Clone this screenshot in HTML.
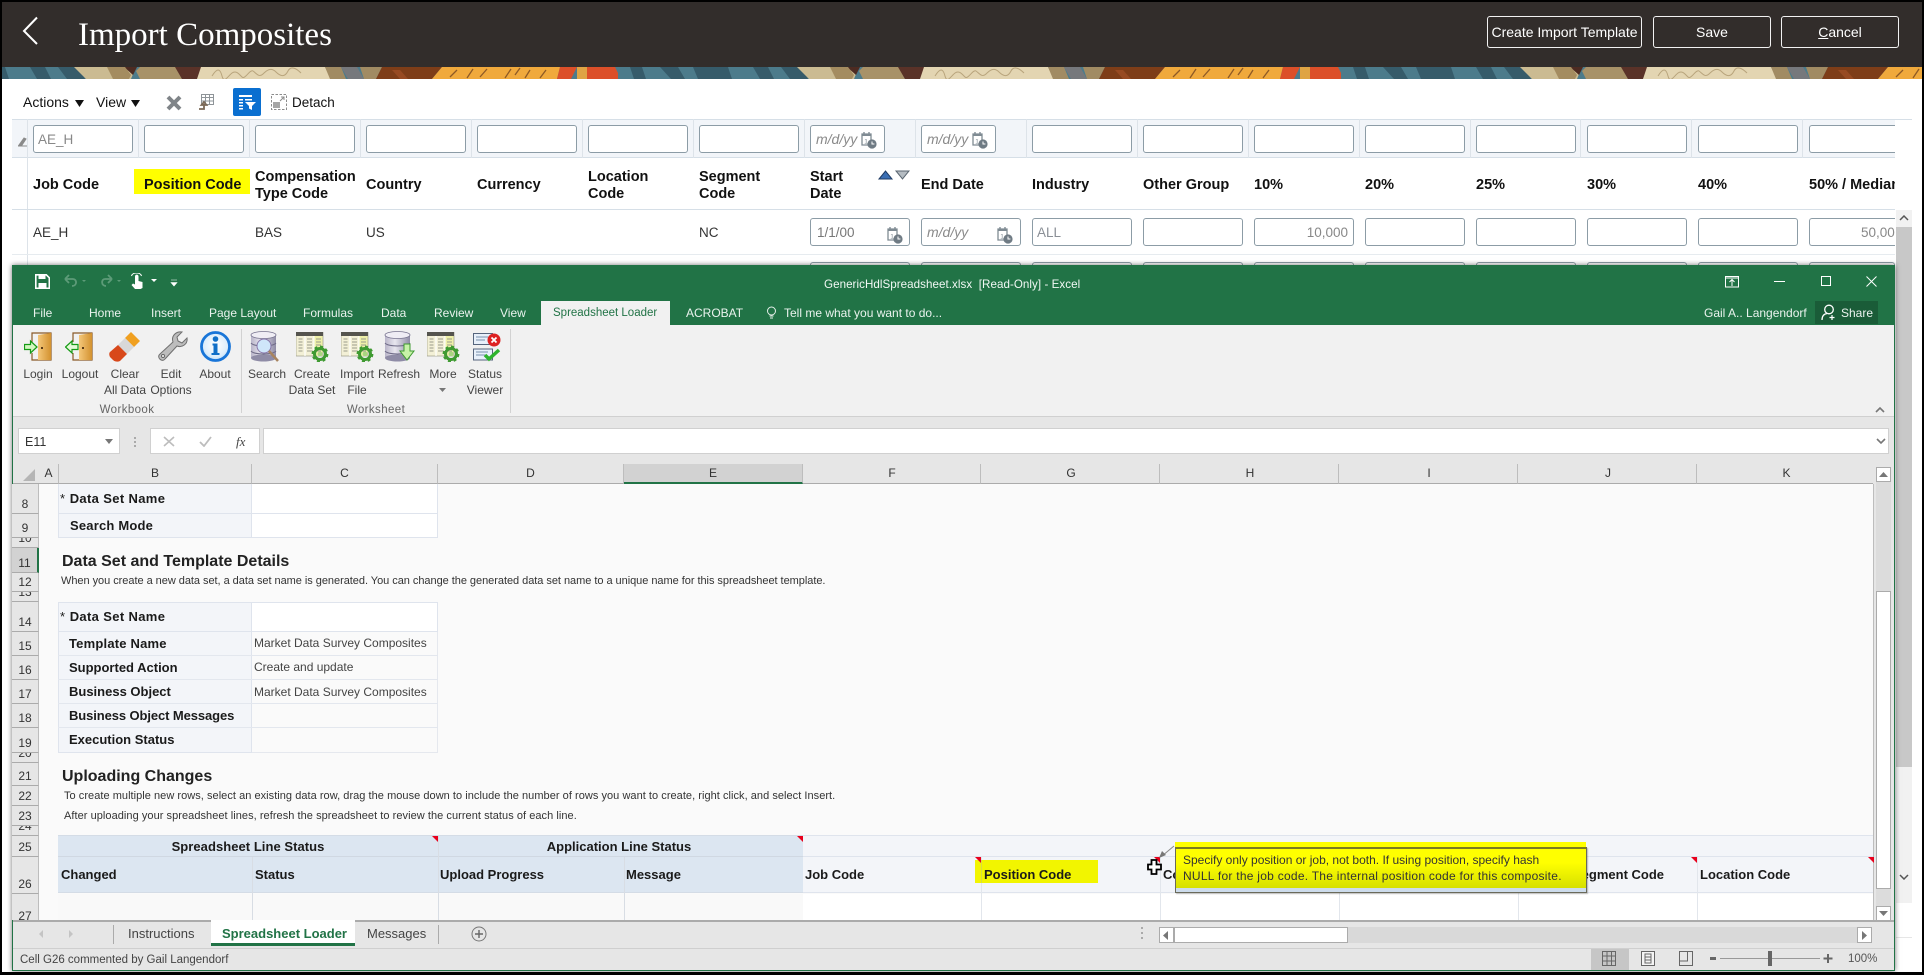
<!DOCTYPE html>
<html lang="en"><head><meta charset="utf-8"><title>Import Composites</title>
<style>
*{box-sizing:border-box}
html,body{margin:0;padding:0;width:1924px;height:975px;overflow:hidden;background:#fff;font-family:"Liberation Sans",Arial,sans-serif}
#p{position:relative;width:1924px;height:975px;overflow:hidden;background:#fff}
.a,.t,.i,.h,.in,.rh,.cl,.btn{position:absolute}
.t{white-space:nowrap;line-height:16px;height:16px}
.c{transform:translateX(-50%)}
.h{font-weight:bold;font-size:14.500px;line-height:17px;color:#111;white-space:nowrap}
.d{font-size:13.500px;color:#333}
.in{background:#fff;border:1px solid #8c9ca6;border-radius:3px;height:28px;width:100px;font-size:13.500px;color:#888;line-height:27px;padding-left:4px;overflow:hidden;white-space:nowrap}
.f{top:125px}.r{top:218px}
.it{font-style:italic;color:#8a8a8a;font-size:14px}
.v{position:absolute;top:119px;height:39px;width:1px;background:#dde3e9}
.btn{top:16px;height:32px;border:1px solid #f2f2f2;border-radius:3px;color:#fff;font-size:14px;text-align:center;line-height:31px;background:#322d2b;white-space:nowrap}
.w{color:#eaf3ee;font-size:12px}
.rb{font-size:12px;color:#444;text-align:center}
.rh{left:12px;width:27px;background:#e6e6e6;border-bottom:1px solid #ababab;border-right:1px solid #bdbdbd;display:flex;justify-content:center;align-items:flex-end;overflow:hidden;font-size:12px;line-height:16px;color:#333;padding-bottom:1px}
.cl{top:464px;height:20px;background:#e6e6e6;border-right:1px solid #bdbdbd;border-bottom:1px solid #ababab;text-align:center;font-size:12px;line-height:18px;color:#333}
.lb{font:bold 13px/16px "Liberation Sans",sans-serif;color:#1a1a1a}
.cv{font-size:12px;color:#444}
.sm{font-size:11px;color:#333}
.hh{font:bold 16px/18px "Liberation Sans",sans-serif;color:#222}
.tr{position:absolute;width:0;height:0;border-top:6px solid #e8001c;border-left:6px solid transparent}
</style></head><body><div id="p">

<svg width="0" height="0" style="position:absolute"><defs>
<g id="stg">
<rect x="-105" width="723" height="12" fill="#4c7b8b"/>
<path fill="#365b6a" d="M-93 0h12l4 12h-12zM-63 0h18l7 12h-14zM-30 0h35l4 12h-34zM30 0h15l6 12h-14zM58 0h22l5 12h-18z"/>
<path fill="#cbbb92" d="M74 0h62l-5 12H86z"/>
<path fill="#4d2b22" d="M124 0h13l-4 8z"/>
<path fill="#a48c60" d="M107 0h18l6 8-2 4h-16z"/>
<path fill="#a89268" d="M140 0h36l6 12h-42l-4-8z"/>
<path fill="#5a3228" d="M175 0h27l-5 12h-15z"/>
<path fill="#e3d5b2" d="M201 0h124l6 12H197z"/>
<path fill="none" stroke="#b8a47c" stroke-width="1" d="M212 9c5-8 8-8 10 0s6 0 10-3 7 1 10 4 8-8 11-6 6 7 10 3 8-7 13-2 9 5 12-1 9-2 13 2"/>
<path fill="#a18b63" d="M325 0h16l5 12h-16zM360 0h22l-6 12h-12z"/>
<path fill="#76787c" d="M341 0h16l7 12h-16z"/>
<path fill="#7e3d18" d="M382 0h60l-10 12h-56z"/>
<path fill="#a8532a" d="M400 12l-8-9 8 0 8 9z" opacity=".6"/>
<path fill="#f0a93c" d="M442 0h118l-3 12H432z"/>
<path fill="none" stroke="#8e5a26" stroke-width="1.300" d="M450 10l7-7M467 11l6-9M480 10l7-8M505 11l6-9M515 8l5-7M525 11l5-8M540 11l6-8"/>
<path fill="#dc4f29" d="M560 0h17l-6 12h-14zM587 0h28l6 12h-34z"/>
<rect x="577" width="10" height="12" fill="#f0a93c" opacity=".9"/>
</g>
<symbol id="cal" viewBox="0 0 16 18"><path d="M1 3h9v11H1z" fill="#fff" stroke="#7f8b93" stroke-width="1.300"/><path d="M3 1v3M8 1v3" stroke="#7f8b93" stroke-width="1.400"/><path d="M1 3h9v2H1z" fill="#7f8b93"/><text x="3.200" y="12.500" font-size="6.500" fill="#7f8b93" font-family="Liberation Sans">1</text><circle cx="11" cy="13" r="4.600" fill="#6f7b84"/><path d="M11 10.500V13h2.400" stroke="#fff" stroke-width="1" fill="none"/></symbol>
<linearGradient id="drg" x1="0" x2="1"><stop offset="0" stop-color="#f4c77a"/><stop offset="1" stop-color="#d3922f"/></linearGradient>
<linearGradient id="db" x1="0" x2="1"><stop offset="0" stop-color="#b9b5c9"/><stop offset=".4" stop-color="#e8e6ef"/><stop offset="1" stop-color="#8f8ca6"/></linearGradient>
<radialGradient id="ab" cx=".5" cy=".45" r=".6"><stop offset="0" stop-color="#ffffff"/><stop offset=".7" stop-color="#dcedfb"/><stop offset="1" stop-color="#a7d2f5"/></radialGradient>
<symbol id="tbl" viewBox="0 0 33 30"><rect x="0" y="0" width="27" height="24" fill="#f3f0d6" stroke="#9a9a86" stroke-width=".7"/><rect width="27" height="4" fill="#55544e"/><path d="M9 4v20M18 4v20" stroke="#fff" stroke-width="1.200"/><rect x="18.500" y="4" width="8" height="20" fill="#eef0a8"/><path d="M2.500 7h4M2.500 10h4M2.500 13h4M2.500 16h4M2.500 19h4M11 7h5M11 10h5M11 13h5M11 16h5M11 19h5M20 7h5M20 10h5M20 13h5M20 16h5M20 19h5" stroke="#9b9b8c" stroke-width="1"/><circle cx="24" cy="22" r="5.500" fill="none" stroke="#3f9a31" stroke-width="3"/><circle cx="24" cy="22" r="7.300" fill="none" stroke="#3f9a31" stroke-width="2.200" stroke-dasharray="3 2.700"/><circle cx="24" cy="22" r="2.400" fill="#a8d67f"/></symbol>
<symbol id="cyl" viewBox="0 0 27 31"><rect x="1" y="4" width="25" height="23" fill="url(#db)"/><ellipse cx="13.500" cy="27" rx="12.500" ry="3.500" fill="#8f8ca6"/><ellipse cx="13.500" cy="4" rx="12.500" ry="3.500" fill="#efedf4" stroke="#77748f" stroke-width=".8"/><path d="M1 12c3 4 22 4 25 0M1 20c3 4 22 4 25 0" fill="none" stroke="#6e6a86" stroke-width="1"/></symbol>
<symbol id="door" viewBox="0 0 28 29"><path d="M8 10V1h19v27H8v-7" fill="none" stroke="#8a5a28" stroke-width="1.200"/><path d="M14 3l13-2v27H14z" fill="url(#drg)"/><rect x="17" y="15" width="2" height="2" fill="#5a3b17"/></symbol>
</defs></svg>

<!-- outer border -->
<div class="a" style="left:0;top:0;width:1924px;height:2px;background:#000"></div>
<div class="a" style="left:0;top:0;width:2px;height:975px;background:#000"></div>
<div class="a" style="left:0;top:972px;width:1924px;height:3px;background:#000"></div>
<div class="a" style="left:1922px;top:0;width:2px;height:975px;background:#000"></div>

<!-- header -->
<div class="a" style="left:2px;top:2px;width:1920px;height:65px;background:#322d2b"></div>
<svg class="a" style="left:2px;top:67px" width="1920" height="12" viewBox="2 0 1920 12"><use href="#stg"/><use href="#stg" x="723"/><use href="#stg" x="1446"/></svg>
<svg class="a" style="left:20px;top:15px" width="22" height="30"><path d="M17 2.500 4 16l13 13" fill="none" stroke="#fff" stroke-width="2"/></svg>
<div class="t" style="left:78px;top:17px;height:36px;font:33px/36px 'Liberation Serif',serif;color:#fff">Import Composites</div>
<div class="btn" style="left:1487px;width:155px">Create Import Template</div>
<div class="btn" style="left:1653px;width:118px">Save</div>
<div class="btn" style="left:1781px;width:118px"><u>C</u>ancel</div>

<!-- toolbar -->
<div class="t" style="left:23px;top:94px;font-size:14px;color:#111">Actions</div>
<svg class="a" style="left:75px;top:100px" width="9" height="8"><path d="M0 0h9L4.500 7z" fill="#111"/></svg>
<div class="t" style="left:96px;top:94px;font-size:14px;color:#111">View</div>
<svg class="a" style="left:131px;top:100px" width="9" height="8"><path d="M0 0h9L4.500 7z" fill="#111"/></svg>
<svg class="a" style="left:166px;top:95px" width="16" height="16"><path d="M2 2l12 12M14 2 2 14" stroke="#7f8488" stroke-width="4"/></svg>
<svg class="a" style="left:198px;top:93px" width="16" height="18"><path d="M3.500 1.500h12v10h-12zM3.500 4.500h12M7.500 1.500v10M11.500 1.500v10M3.500 8h12" fill="none" stroke="#8e9498" stroke-width="1"/><path d="M6 11v5H1M6 9l-2.500 3h5z" fill="none" stroke="#7b6a58" stroke-width="1.800"/></svg>
<div class="a" style="left:233px;top:88px;width:28px;height:28px;background:#0a6fd0;border-radius:2px"></div>
<svg class="a" style="left:238px;top:94px" width="19" height="17"><path d="M1 1h13v2H1zM1 5h4v1.500H1zM1 8h4v1.500H1zM1 11h4v1.500H1zM1 14h4v1.500H1zM7 5h7v1.500H7z" fill="#fff"/><path d="M7 8h11l-4 4v4l-3-1.500V12z" fill="#fff"/></svg>
<svg class="a" style="left:271px;top:94px" width="16" height="16"><rect x=".5" y=".5" width="15" height="15" fill="none" stroke="#8b8b8b" stroke-dasharray="2.500 1.500"/><rect x="2" y="8" width="7" height="6" fill="#a5a5a5"/><path d="M9 7l4-4M10 3h3v3" fill="none" stroke="#8b8b8b"/></svg>
<div class="t" style="left:292px;top:95px;font-size:13.500px;color:#111">Detach</div>

<!-- filter row -->
<div class="a" style="left:12px;top:119px;width:1883px;height:39px;background:#f2f5f9;border-top:1px solid #d6dfe7;border-bottom:1px solid #d6dfe7"></div>
<div class="a" style="left:1895px;top:119px;width:17px;height:1px;background:#d6dfe7"></div>
<div class="a" style="left:27px;top:119px;width:1px;height:146px;background:#dde3e9"></div>
<svg class="a" style="left:18px;top:134px" width="9" height="13"><path d="M1 11l5-7 2 1-4 6zM0 12h9" stroke="#8a8a8a" fill="#8a8a8a"/></svg>
<div class="v" style="left:138px"></div><div class="v" style="left:249px"></div><div class="v" style="left:360px"></div><div class="v" style="left:471px"></div><div class="v" style="left:582px"></div><div class="v" style="left:693px"></div><div class="v" style="left:804px"></div><div class="v" style="left:915px"></div><div class="v" style="left:1026px"></div><div class="v" style="left:1137px"></div><div class="v" style="left:1248px"></div><div class="v" style="left:1359px"></div><div class="v" style="left:1470px"></div><div class="v" style="left:1580px"></div><div class="v" style="left:1691px"></div><div class="v" style="left:1802px"></div>
<div class="in f" style="left:33px">AE_H</div>
<div class="in f" style="left:144px"></div><div class="in f" style="left:255px"></div><div class="in f" style="left:366px"></div><div class="in f" style="left:477px"></div><div class="in f" style="left:588px"></div><div class="in f" style="left:699px"></div>
<div class="in f it" style="left:810px;width:75px;padding-left:5px">m/d/yy</div>
<svg class="a" style="left:861px;top:131px" width="16" height="18"><use href="#cal"/></svg>
<div class="in f it" style="left:921px;width:75px;padding-left:5px">m/d/yy</div>
<svg class="a" style="left:972px;top:131px" width="16" height="18"><use href="#cal"/></svg>
<div class="in f" style="left:1032px"></div><div class="in f" style="left:1143px"></div><div class="in f" style="left:1254px"></div><div class="in f" style="left:1365px"></div><div class="in f" style="left:1476px"></div><div class="in f" style="left:1587px"></div><div class="in f" style="left:1698px"></div>
<div class="in f" style="left:1809px;width:86px;border-right:0;border-radius:3px 0 0 3px"></div>

<!-- header row -->
<div class="a" style="left:134px;top:169px;width:116px;height:25px;background:#ffff00"></div>
<div class="h" style="left:33px;top:177px">Job Code</div>
<div class="h" style="left:144px;top:177px">Position Code</div>
<div class="h" style="left:255px;top:169px">Compensation<br>Type Code</div>
<div class="h" style="left:366px;top:177px">Country</div>
<div class="h" style="left:477px;top:177px">Currency</div>
<div class="h" style="left:588px;top:169px">Location<br>Code</div>
<div class="h" style="left:699px;top:169px">Segment<br>Code</div>
<div class="h" style="left:810px;top:169px">Start<br>Date</div>
<svg class="a" style="left:878px;top:170px" width="32" height="10"><path d="M1 9 7.500 1 14 9z" fill="#3b6fb4" stroke="#1f3b63"/><path d="M18 1h13l-6.500 8z" fill="#b5bcc2" stroke="#5a6570"/></svg>
<div class="h" style="left:921px;top:177px">End Date</div>
<div class="h" style="left:1032px;top:177px">Industry</div>
<div class="h" style="left:1143px;top:177px">Other Group</div>
<div class="h" style="left:1254px;top:177px">10%</div>
<div class="h" style="left:1365px;top:177px">20%</div>
<div class="h" style="left:1476px;top:177px">25%</div>
<div class="h" style="left:1587px;top:177px">30%</div>
<div class="h" style="left:1698px;top:177px">40%</div>
<div class="h" style="left:1809px;top:177px;width:86px;overflow:hidden">50% / Median</div>
<div class="a" style="left:12px;top:209px;width:1883px;height:1px;background:#d6dfe7"></div>

<!-- data row -->
<div class="t d" style="left:33px;top:225px">AE_H</div>
<div class="t d" style="left:255px;top:225px">BAS</div>
<div class="t d" style="left:366px;top:225px">US</div>
<div class="t d" style="left:699px;top:225px">NC</div>
<div class="in r" style="left:810px;color:#777;padding-left:6px">1/1/00</div>
<svg class="a" style="left:887px;top:226px" width="16" height="18"><use href="#cal"/></svg>
<div class="in r it" style="left:921px;padding-left:5px">m/d/yy</div>
<svg class="a" style="left:997px;top:226px" width="16" height="18"><use href="#cal"/></svg>
<div class="in r" style="left:1032px;color:#8a8f96">ALL</div>
<div class="in r" style="left:1143px"></div>
<div class="in r" style="left:1254px;text-align:right;padding-right:5px;color:#888">10,000</div>
<div class="in r" style="left:1365px"></div><div class="in r" style="left:1476px"></div><div class="in r" style="left:1587px"></div><div class="in r" style="left:1698px"></div>
<div class="in r" style="left:1809px;width:86px;border-right:0;border-radius:3px 0 0 3px;color:#888;padding-left:51px">50,00</div>
<div class="a" style="left:12px;top:254px;width:1883px;height:1px;background:#e6ebef"></div>
<div class="a" style="left:810px;top:262px;width:100px;height:4px;border:1px solid #8c9ca6;border-bottom:0;border-radius:3px 3px 0 0"></div>
<div class="a" style="left:921px;top:262px;width:100px;height:4px;border:1px solid #8c9ca6;border-bottom:0;border-radius:3px 3px 0 0"></div>
<div class="a" style="left:1032px;top:262px;width:100px;height:4px;border:1px solid #8c9ca6;border-bottom:0;border-radius:3px 3px 0 0"></div>
<div class="a" style="left:1143px;top:262px;width:100px;height:4px;border:1px solid #8c9ca6;border-bottom:0;border-radius:3px 3px 0 0"></div>
<div class="a" style="left:1254px;top:262px;width:100px;height:4px;border:1px solid #8c9ca6;border-bottom:0;border-radius:3px 3px 0 0"></div>
<div class="a" style="left:1365px;top:262px;width:100px;height:4px;border:1px solid #8c9ca6;border-bottom:0;border-radius:3px 3px 0 0"></div>
<div class="a" style="left:1476px;top:262px;width:100px;height:4px;border:1px solid #8c9ca6;border-bottom:0;border-radius:3px 3px 0 0"></div>
<div class="a" style="left:1587px;top:262px;width:100px;height:4px;border:1px solid #8c9ca6;border-bottom:0;border-radius:3px 3px 0 0"></div>
<div class="a" style="left:1698px;top:262px;width:100px;height:4px;border:1px solid #8c9ca6;border-bottom:0;border-radius:3px 3px 0 0"></div>
<div class="a" style="left:1809px;top:262px;width:86px;height:4px;border:1px solid #8c9ca6;border-bottom:0;border-radius:3px 3px 0 0"></div>

<!-- page scrollbar -->
<div class="a" style="left:1896px;top:210px;width:16px;height:17px;background:#f1f1f1"></div>
<svg class="a" style="left:1899px;top:215px" width="10" height="6"><path d="M1 5l4-4 4 4" fill="none" stroke="#555" stroke-width="1.500"/></svg>
<div class="a" style="left:1896px;top:227px;width:16px;height:540px;background:#c8c8c8"></div>
<div class="a" style="left:1896px;top:767px;width:16px;height:136px;background:#f1f1f1"></div>
<svg class="a" style="left:1899px;top:874px" width="10" height="6"><path d="M1 1l4 4 4-4" fill="none" stroke="#555" stroke-width="1.500"/></svg>
<div class="a" style="left:1896px;top:937px;width:16px;height:1px;background:#e6e6e6"></div>

<!-- excel window -->
<div class="a" style="left:12px;top:265px;width:1883px;height:706px;background:#e6e6e6;border:1px solid #217346;border-top:0;box-shadow:0 0 5px rgba(0,0,0,.55)"></div>
<div class="a" style="left:12px;top:265px;width:1883px;height:60px;background:#217346"></div>
<svg class="a" style="left:35px;top:274px" width="15" height="15"><path d="M.8.8h10.500l3 3v10.500H.8z" fill="none" stroke="#fff" stroke-width="1.600"/><rect x="3.500" y="1" width="7" height="4" fill="#fff"/><rect x="3.500" y="9" width="8" height="5" fill="#fff"/></svg>
<svg class="a" style="left:63px;top:274px" width="24" height="14"><path d="M2 5h8c4 0 4.500 7-1 7M2 5l4-4M2 5l4 4" fill="none" stroke="#5d9b78" stroke-width="1.800"/><path d="M19 6h4l-2 2z" fill="#5d9b78"/></svg>
<svg class="a" style="left:99px;top:274px" width="24" height="14"><path d="M13 5H6c-4 0-4 7 1 7M13 5 9 1M13 5 9 9" fill="none" stroke="#5d9b78" stroke-width="1.800"/><path d="M18 6h4l-2 2z" fill="#5d9b78"/></svg>
<svg class="a" style="left:130px;top:273px" width="30" height="17"><path d="M5 8V3.500c0-2.500 3.500-2.500 3.500 0V8l4 1v6l-2 1H5L1.500 12 3 10.500l2 1z" fill="#fff"/><path d="M1.500 3c1-4 9-4 10 0" fill="none" stroke="#fff"/><path d="M21 6h6l-3 3z" fill="#fff"/></svg>
<svg class="a" style="left:170px;top:279px" width="8" height="8"><path d="M1 1h6M1 3.500h6L4 7z" stroke="#fff" fill="#fff" stroke-width=".6"/></svg>
<div class="t" style="left:824px;top:277px;font-size:11.600px;color:#f1f8f4;letter-spacing:.05px">GenericHdlSpreadsheet.xlsx&nbsp;&nbsp;[Read-Only] - Excel</div>
<svg class="a" style="left:1725px;top:275px" width="15" height="13"><rect x=".5" y="1.500" width="13" height="10.500" fill="none" stroke="#fff"/><path d="M.5 3h13M7 11V5M4.500 7 7 4.500 9.500 7" fill="none" stroke="#fff"/></svg>
<div class="a" style="left:1774px;top:281px;width:11px;height:1px;background:#fff"></div>
<div class="a" style="left:1821px;top:276px;width:10px;height:10px;border:1px solid #fff"></div>
<svg class="a" style="left:1866px;top:276px" width="11" height="11"><path d="M.5.500l10 10M10.500.500l-10 10" stroke="#fff"/></svg>

<div class="t w" style="left:33px;top:305px">File</div>
<div class="t w" style="left:89px;top:305px">Home</div>
<div class="t w" style="left:151px;top:305px">Insert</div>
<div class="t w" style="left:209px;top:305px">Page Layout</div>
<div class="t w" style="left:303px;top:305px">Formulas</div>
<div class="t w" style="left:381px;top:305px">Data</div>
<div class="t w" style="left:434px;top:305px">Review</div>
<div class="t w" style="left:500px;top:305px">View</div>
<div class="a" style="left:541px;top:301px;width:129px;height:24px;background:#f1f1f1"></div>
<div class="t" style="left:553px;top:305px;font-size:11.500px;color:#217346">Spreadsheet Loader</div>
<div class="t w" style="left:686px;top:305px">ACROBAT</div>
<svg class="a" style="left:766px;top:306px" width="11" height="15"><circle cx="5.500" cy="5" r="4" fill="none" stroke="#e6f0ea"/><path d="M3.500 10h4M4 12h3" stroke="#e6f0ea"/></svg>
<div class="t w" style="left:784px;top:305px">Tell me what you want to do...</div>
<div class="t w" style="left:1704px;top:305px">Gail A.. Langendorf</div>
<div class="a" style="left:1815px;top:301px;width:63px;height:23px;background:#1a5c38"></div>
<svg class="a" style="left:1821px;top:304px" width="16" height="17"><circle cx="8" cy="5.500" r="4.300" fill="none" stroke="#fff" stroke-width="1.300"/><path d="M1 16c0-4 2-6 5-6.500" fill="none" stroke="#fff" stroke-width="1.300"/><path d="M11 11v5M8.500 13.500h5" stroke="#fff" stroke-width="1.200"/></svg>
<div class="t w" style="left:1841px;top:305px">Share</div>

<!-- ribbon -->
<div class="a" style="left:13px;top:325px;width:1881px;height:92px;background:#f1f1f1;border-bottom:1px solid #d0d0d0"></div>
<svg class="a" style="left:24px;top:332px" width="28" height="29"><use href="#door"/><path d="M.5 12.500h6V9l6.500 6-6.500 6v-3.500h-6z" fill="#d4f7c0" stroke="#159a15" stroke-width="1.200"/></svg>
<svg class="a" style="left:65px;top:332px" width="28" height="29"><use href="#door"/><path d="M13 12.500H7V9L.5 15 7 21v-3.500h6z" fill="#e4fad8" stroke="#159a15" stroke-width="1.200"/></svg>
<svg class="a" style="left:109px;top:331px" width="32" height="32"><path d="M22 1l9 9-6 6-9-9z" fill="#f0a020"/><path d="M16 7l9 9-7 7-9-9z" fill="#d8d8d8"/><path d="M9 14l9 9-7 7c-2 1-5 1-7-1l-3-3c-1-2-1-4 0-5z" fill="#d8481a"/></svg>
<svg class="a" style="left:155px;top:331px" width="33" height="32"><path d="M32 7c1 6-5 10-10 8L10 28c-3 4-9-2-5-5l13-12c-2-6 3-11 9-10l-5 5 1 4 4 2z" fill="#bdbdbd" stroke="#6f6f6f"/><circle cx="8" cy="25" r="1.500" fill="#fff" stroke="#666"/></svg>
<svg class="a" style="left:200px;top:331px" width="31" height="31"><circle cx="15.500" cy="15.500" r="14" fill="url(#ab)" stroke="#1875d8" stroke-width="2.800"/><circle cx="15.500" cy="8" r="2.800" fill="#0f6fc8"/><path d="M12.500 12.500h5V22h2v2h-8v-2h2v-7.500h-1z" fill="#0f6fc8"/></svg>
<div class="a" style="left:241px;top:329px;width:1px;height:84px;background:#d2d2d2"></div>
<svg class="a" style="left:250px;top:331px" width="33" height="33"><use href="#cyl" width="27" height="31"/><circle cx="14" cy="15" r="7" fill="#cfe6fa" stroke="#87a" stroke-width="1"/><path d="M19 20l9 10" stroke="#a8845f" stroke-width="2.500"/></svg>
<svg class="a" style="left:296px;top:332px" width="33" height="30"><use href="#tbl"/></svg>
<svg class="a" style="left:341px;top:332px" width="33" height="30"><use href="#tbl"/></svg>
<svg class="a" style="left:384px;top:331px" width="33" height="32"><use href="#cyl" width="27" height="31"/><path d="M20 13h6v7h4l-7 9-7-9h4z" fill="#c7f2a8" stroke="#3f9a31"/></svg>
<svg class="a" style="left:427px;top:332px" width="33" height="30"><use href="#tbl"/></svg>
<svg class="a" style="left:473px;top:332px" width="29" height="30"><rect x=".5" y="1.500" width="19" height="11" fill="#e8f0fa" stroke="#56657d"/><rect x=".5" y="17" width="19" height="11" fill="#e8f0fa" stroke="#56657d"/><path d="M3 5h12M3 8h9M3 20h12M3 23h9" stroke="#7890ac"/><circle cx="21" cy="8" r="6.500" fill="#d22"/><path d="M18.500 5.500l5 5M23.500 5.500l-5 5" stroke="#fff" stroke-width="1.800"/><path d="M12 23l4 4 10-9" fill="none" stroke="#2db42d" stroke-width="3.500"/></svg>

<div class="t rb c" style="left:38px;top:366px">Login</div>
<div class="t rb c" style="left:80px;top:366px">Logout</div>
<div class="t rb c" style="left:125px;top:366px">Clear</div>
<div class="t rb c" style="left:125px;top:382px">All Data</div>
<div class="t rb c" style="left:171px;top:366px">Edit</div>
<div class="t rb c" style="left:171px;top:382px">Options</div>
<div class="t rb c" style="left:215px;top:366px">About</div>
<div class="t rb c" style="left:267px;top:366px">Search</div>
<div class="t rb c" style="left:312px;top:366px">Create</div>
<div class="t rb c" style="left:312px;top:382px">Data Set</div>
<div class="t rb c" style="left:357px;top:366px">Import</div>
<div class="t rb c" style="left:357px;top:382px">File</div>
<div class="t rb c" style="left:399px;top:366px">Refresh</div>
<div class="t rb c" style="left:443px;top:366px">More</div>
<svg class="a" style="left:439px;top:388px" width="7" height="4"><path d="M0 0h7L3.500 4z" fill="#777"/></svg>
<div class="t rb c" style="left:485px;top:366px">Status</div>
<div class="t rb c" style="left:485px;top:382px">Viewer</div>
<div class="t rb c" style="left:127px;top:402px;font-size:11.500px;color:#666;letter-spacing:.4px">Workbook</div>
<div class="t rb c" style="left:376px;top:402px;font-size:11.500px;color:#666;letter-spacing:.4px">Worksheet</div>
<div class="a" style="left:510px;top:329px;width:1px;height:84px;background:#d2d2d2"></div>
<svg class="a" style="left:1875px;top:406px" width="10" height="7"><path d="M1 6l4-4 4 4" fill="none" stroke="#777" stroke-width="1.600"/></svg>

<!-- formula bar -->
<div class="a" style="left:18px;top:428px;width:102px;height:26px;background:#fff;border:1px solid #d0d0d0"></div>
<div class="t" style="left:25px;top:434px;font-size:12.500px;color:#333">E11</div>
<svg class="a" style="left:105px;top:439px" width="8" height="5"><path d="M0 0h8L4 5z" fill="#777"/></svg>
<div class="a" style="left:134px;top:437px;width:2px;height:2px;background:#aaa;box-shadow:0 4px #aaa,0 8px #aaa"></div>
<div class="a" style="left:150px;top:428px;width:110px;height:26px;background:#fff;border:1px solid #d0d0d0"></div>
<svg class="a" style="left:163px;top:436px" width="12" height="11"><path d="M1 1l10 9M11 1 1 10" stroke="#bdbdbd" stroke-width="1.600"/></svg>
<svg class="a" style="left:199px;top:436px" width="13" height="11"><path d="M1 6l4 4 7-9" fill="none" stroke="#bdbdbd" stroke-width="1.800"/></svg>
<div class="t" style="left:236px;top:434px;font:italic 13px/16px 'Liberation Serif',serif;color:#444">fx</div>
<div class="a" style="left:263px;top:428px;width:1626px;height:26px;background:#fff;border:1px solid #d0d0d0"></div>
<svg class="a" style="left:1876px;top:438px" width="10" height="7"><path d="M1 1l4 4 4-4" fill="none" stroke="#777" stroke-width="1.600"/></svg>

<!-- col headers -->
<div class="a" style="left:13px;top:464px;width:1860px;height:20px;background:#e6e6e6;border-bottom:1px solid #ababab"></div>
<svg class="a" style="left:23px;top:469px" width="13" height="13"><path d="M12 0v12H0z" fill="#b5b5b5"/></svg>
<div class="cl" style="left:39px;width:20px">A</div>
<div class="cl" style="left:59px;width:193px">B</div>
<div class="cl" style="left:252px;width:186px">C</div>
<div class="cl" style="left:438px;width:186px">D</div>
<div class="cl" style="left:624px;width:179px;background:#d2d2d2;border-bottom:2px solid #217346">E</div>
<div class="cl" style="left:803px;width:178px;padding-left:1px">F</div>
<div class="cl" style="left:981px;width:179px;padding-left:2px">G</div>
<div class="cl" style="left:1160px;width:179px;padding-left:2px">H</div>
<div class="cl" style="left:1339px;width:179px;padding-left:2px">I</div>
<div class="cl" style="left:1518px;width:179px;padding-left:2px">J</div>
<div class="cl" style="left:1697px;width:176px;border-right:0;padding-left:3px">K</div>

<!-- sheet -->
<div class="a" style="left:39px;top:484px;width:1835px;height:436px;background:#fafafa;border-right:1px solid #bdbdbd"></div>
<div class="rh" style="top:484px;height:30px">8</div>
<div class="rh" style="top:514px;height:24px">9</div>
<div class="rh" style="top:538px;height:10px">10</div>
<div class="rh" style="top:548px;height:25px;background:#d2d2d2;border-right:2px solid #217346">11</div>
<div class="rh" style="top:573px;height:19px">12</div>
<div class="rh" style="top:592px;height:10px">13</div>
<div class="rh" style="top:602px;height:30px">14</div>
<div class="rh" style="top:632px;height:24px">15</div>
<div class="rh" style="top:656px;height:24px">16</div>
<div class="rh" style="top:680px;height:24px">17</div>
<div class="rh" style="top:704px;height:24px">18</div>
<div class="rh" style="top:728px;height:25px">19</div>
<div class="rh" style="top:753px;height:10px">20</div>
<div class="rh" style="top:763px;height:23px">21</div>
<div class="rh" style="top:786px;height:20px">22</div>
<div class="rh" style="top:806px;height:20px">23</div>
<div class="rh" style="top:826px;height:10px">24</div>
<div class="rh" style="top:836px;height:21px">25</div>
<div class="rh" style="top:857px;height:37px">26</div>
<div class="rh" style="top:894px;height:26px;border-bottom:0;align-items:flex-start"><span style="margin-top:14px">27</span></div>

<!-- table 1 -->
<div class="a" style="left:58px;top:484px;width:194px;height:54px;background:#f3f5f9;border:1px solid #dfe4ed;border-top:0"></div>
<div class="a" style="left:252px;top:484px;width:186px;height:54px;background:#fff;border:1px solid #dfe4ed;border-left:0;border-top:0"></div>
<div class="a" style="left:58px;top:513px;width:380px;height:1px;background:#dfe4ed"></div>
<div class="t lb" style="left:60px;top:491px"><span style="font-weight:normal">*</span> <span style="letter-spacing:.35px;margin-left:1px">Data Set Name</span></div>
<div class="t lb" style="left:70px;top:518px;letter-spacing:.2px">Search Mode</div>

<div class="t hh" style="left:62px;top:553px;height:18px">Data Set and Template Details</div>
<div class="t sm" style="left:61px;top:573px;letter-spacing:-.04px">When you create a new data set, a data set name is generated. You can change the generated data set name to a unique name for this spreadsheet template.</div>

<!-- table 2 -->
<div class="a" style="left:58px;top:602px;width:194px;height:151px;background:#f3f5f9;border:1px solid #dfe4ed"></div>
<div class="a" style="left:252px;top:602px;width:186px;height:151px;background:#fafafa;border:1px solid #e5e8ee;border-left:0"></div>
<div class="a" style="left:252px;top:602px;width:186px;height:30px;background:#fff;border:1px solid #dfe4ed;border-left:0"></div>
<div class="a" style="left:58px;top:631px;width:380px;height:1px;background:#dfe4ed"></div>
<div class="a" style="left:58px;top:655px;width:380px;height:1px;background:#e3e7ee"></div>
<div class="a" style="left:58px;top:679px;width:380px;height:1px;background:#e3e7ee"></div>
<div class="a" style="left:58px;top:703px;width:380px;height:1px;background:#e3e7ee"></div>
<div class="a" style="left:58px;top:727px;width:380px;height:1px;background:#e3e7ee"></div>
<div class="t lb" style="left:60px;top:609px"><span style="font-weight:normal">*</span> <span style="letter-spacing:.35px;margin-left:1px">Data Set Name</span></div>
<div class="t lb" style="left:69px;top:636px;letter-spacing:.2px">Template Name</div>
<div class="t lb" style="left:69px;top:660px">Supported Action</div>
<div class="t lb" style="left:69px;top:684px">Business Object</div>
<div class="t lb" style="left:69px;top:708px;letter-spacing:-.1px">Business Object Messages</div>
<div class="t lb" style="left:69px;top:732px">Execution Status</div>
<div class="t cv" style="left:254px;top:635px">Market Data Survey Composites</div>
<div class="t cv" style="left:254px;top:659px">Create and update</div>
<div class="t cv" style="left:254px;top:684px">Market Data Survey Composites</div>

<div class="t hh" style="left:62px;top:768px;height:18px">Uploading Changes</div>
<div class="t sm" style="left:64px;top:788px;letter-spacing:.04px">To create multiple new rows, select an existing data row, drag the mouse down to include the number of rows you want to create, right click, and select Insert.</div>
<div class="t sm" style="left:64px;top:808px;letter-spacing:.05px">After uploading your spreadsheet lines, refresh the spreadsheet to review the current status of each line.</div>

<!-- table 3 -->
<div class="a" style="left:803px;top:835px;width:1070px;height:58px;background:#f3f5f9;border-top:1px solid #dfe4ed;border-bottom:1px solid #dfe4ed"></div>
<div class="a" style="left:803px;top:856px;width:1070px;height:1px;background:#dfe4ed"></div>
<div class="a" style="left:58px;top:835px;width:745px;height:58px;background:#dce6f1;border-top:1px solid #d4dce6;border-bottom:1px solid #d4dce6"></div>
<div class="a" style="left:58px;top:856px;width:745px;height:1px;background:#d0d8e2"></div>
<div class="a" style="left:58px;top:894px;width:745px;height:26px;background:#f9f9f9"></div>
<div class="a" style="left:803px;top:894px;width:1070px;height:26px;background:#fff"></div>
<div class="a" style="left:252px;top:857px;width:1px;height:63px;background:#d8dde4"></div>
<div class="a" style="left:438px;top:835px;width:1px;height:85px;background:#d8dde4"></div>
<div class="a" style="left:624px;top:857px;width:1px;height:63px;background:#d8dde4"></div>
<div class="a" style="left:981px;top:857px;width:1px;height:63px;background:#e2e6ec"></div>
<div class="a" style="left:1160px;top:857px;width:1px;height:63px;background:#e2e6ec"></div>
<div class="a" style="left:1339px;top:857px;width:1px;height:63px;background:#e2e6ec"></div>
<div class="a" style="left:1518px;top:857px;width:1px;height:63px;background:#e2e6ec"></div>
<div class="a" style="left:1697px;top:857px;width:1px;height:63px;background:#e2e6ec"></div>
<div class="t lb c" style="left:248px;top:839px;letter-spacing:.05px">Spreadsheet Line Status</div>
<div class="t lb c" style="left:619px;top:839px">Application Line Status</div>
<div class="t lb" style="left:61px;top:867px">Changed</div>
<div class="t lb" style="left:255px;top:867px">Status</div>
<div class="t lb" style="left:440px;top:867px">Upload Progress</div>
<div class="t lb" style="left:626px;top:867px">Message</div>
<div class="t lb" style="left:805px;top:867px">Job Code</div>
<div class="tr" style="left:432px;top:836px"></div>
<div class="tr" style="left:797px;top:836px"></div>
<div class="a" style="left:975px;top:860px;width:123px;height:23px;background:#f2f500"></div>
<div class="a" style="left:981px;top:860px;width:1px;height:23px;background:#d8de40"></div>
<div class="t lb" style="left:984px;top:867px">Position Code</div>
<div class="tr" style="left:975px;top:857px"></div>
<div class="tr" style="left:1154px;top:857px"></div>
<div class="t lb" style="left:1163px;top:867px">Co</div>
<div class="t lb" style="left:1573px;top:867px">Segment Code</div>
<div class="t lb" style="left:1700px;top:867px">Location Code</div>
<div class="tr" style="left:1691px;top:857px"></div>
<div class="tr" style="left:1868px;top:857px"></div>

<!-- tooltip -->
<svg class="a" style="left:1158px;top:844px" width="20" height="16"><path d="M16 2 4 12" stroke="#888"/><path d="M1 14l3-7 4 4z" fill="#777"/></svg>
<div class="a" style="left:1175px;top:842px;width:411px;height:5px;background:#ffff00"></div>
<div class="a" style="left:1175px;top:847px;width:412px;height:46px;background:#cddcec;border:1px solid #6a6a5a;border-top:2px solid #7d7d20;box-shadow:1px 1px 1px rgba(0,0,0,.25)">
<div style="height:39px;background:linear-gradient(#ffff00 0%,#ffff00 35%,#d6e000 100%)"></div></div>
<div class="t" style="left:1183px;top:852px;font-size:12px;color:#333">Specify only position or job, not both. If using position, specify hash</div>
<div class="t" style="left:1183px;top:868px;font-size:12px;color:#333;letter-spacing:.26px">NULL for the job code. The internal position code for this composite.</div>

<!-- cursor -->
<svg class="a" style="left:1147px;top:859px" width="15" height="16"><path d="M4.500 1h5v4.500H14v5H9.500V15h-5v-4.500H1v-5h3.500z" fill="#fff" stroke="#000" stroke-width="1.800"/></svg>

<!-- v scrollbar -->
<div class="a" style="left:1876px;top:467px;width:15px;height:454px;background:#dcdcdc"></div>
<div class="a" style="left:1876px;top:467px;width:15px;height:15px;background:#fff;border:1px solid #ababab"></div>
<svg class="a" style="left:1879px;top:472px" width="9" height="5"><path d="M0 5h9L4.500 0z" fill="#777"/></svg>
<div class="a" style="left:1876px;top:591px;width:15px;height:298px;background:#fff;border:1px solid #ababab"></div>
<div class="a" style="left:1876px;top:906px;width:15px;height:15px;background:#fff;border:1px solid #ababab"></div>
<svg class="a" style="left:1879px;top:911px" width="9" height="5"><path d="M0 0h9L4.500 5z" fill="#777"/></svg>

<!-- sheet tabs -->
<div class="a" style="left:13px;top:920px;width:1881px;height:2px;background:#ababab"></div>
<div class="a" style="left:13px;top:921px;width:1860px;height:1px;background:#ababab"></div>
<svg class="a" style="left:38px;top:929px" width="36" height="10"><path d="M5 1 1 5l4 4zM31 1l4 4-4 4z" fill="#c4c4c4"/></svg>
<div class="a" style="left:113px;top:925px;width:1px;height:19px;background:#ababab"></div>
<div class="t" style="left:128px;top:926px;font-size:13px;color:#444">Instructions</div>
<div class="a" style="left:211px;top:920px;width:144px;height:26px;background:#fff;border-bottom:3px solid #217346"></div>
<div class="t" style="left:222px;top:926px;font:bold 13px/16px 'Liberation Sans',sans-serif;color:#217346">Spreadsheet Loader</div>
<div class="t" style="left:367px;top:926px;font-size:13px;color:#444">Messages</div>
<div class="a" style="left:438px;top:925px;width:1px;height:19px;background:#ababab"></div>
<svg class="a" style="left:471px;top:926px" width="16" height="16"><circle cx="8" cy="8" r="7" fill="none" stroke="#777"/><path d="M8 4v8M4 8h8" stroke="#666" stroke-width="1.400"/></svg>
<div class="a" style="left:1141px;top:927px;width:2px;height:2px;background:#aaa;box-shadow:0 5px #aaa,0 10px #aaa"></div>
<div class="a" style="left:1159px;top:927px;width:15px;height:16px;background:#fff;border:1px solid #ababab"></div>
<svg class="a" style="left:1163px;top:931px" width="6" height="9"><path d="M5 0v9L0 4.500z" fill="#777"/></svg>
<div class="a" style="left:1174px;top:927px;width:174px;height:16px;background:#fff;border:1px solid #ababab"></div>
<div class="a" style="left:1348px;top:927px;width:509px;height:16px;background:#d9d9d9"></div>
<div class="a" style="left:1857px;top:927px;width:15px;height:16px;background:#fff;border:1px solid #ababab"></div>
<svg class="a" style="left:1862px;top:931px" width="6" height="9"><path d="M0 0v9l5-4.500z" fill="#777"/></svg>

<!-- status bar -->
<div class="a" style="left:13px;top:948px;width:1881px;height:1px;background:#cfcfcf"></div>
<div class="t" style="left:20px;top:952px;font-size:11.500px;color:#444">Cell G26 commented by Gail Langendorf</div>
<div class="a" style="left:1591px;top:949px;width:38px;height:21px;background:#c6c6c6"></div>
<svg class="a" style="left:1602px;top:951px" width="14" height="15"><path d="M.5.500h13v14H.5zM.5 5h13M.5 10h13M5 .5v14M9.500.5v14" fill="none" stroke="#666"/></svg>
<svg class="a" style="left:1641px;top:951px" width="14" height="15"><path d="M.5.500h13v14H.5z" fill="#f5f5f5" stroke="#666"/><path d="M4 3h6v9H4zM4 6h6M4 9h6" fill="none" stroke="#666"/></svg>
<svg class="a" style="left:1679px;top:951px" width="14" height="15"><path d="M.5.500h13v14H.5zM.5 10h8V.5" fill="none" stroke="#666"/></svg>
<div class="a" style="left:1710px;top:957px;width:6px;height:3px;background:#666"></div>
<div class="a" style="left:1720px;top:958px;width:100px;height:1px;background:#999"></div>
<div class="a" style="left:1768px;top:951px;width:4px;height:15px;background:#666"></div>
<svg class="a" style="left:1823px;top:953px" width="10" height="11"><path d="M5 1v9M.5 5.500h9" stroke="#666" stroke-width="2"/></svg>
<div class="t" style="left:1848px;top:951px;font-size:11.500px;color:#555">100%</div>

</div></body></html>
